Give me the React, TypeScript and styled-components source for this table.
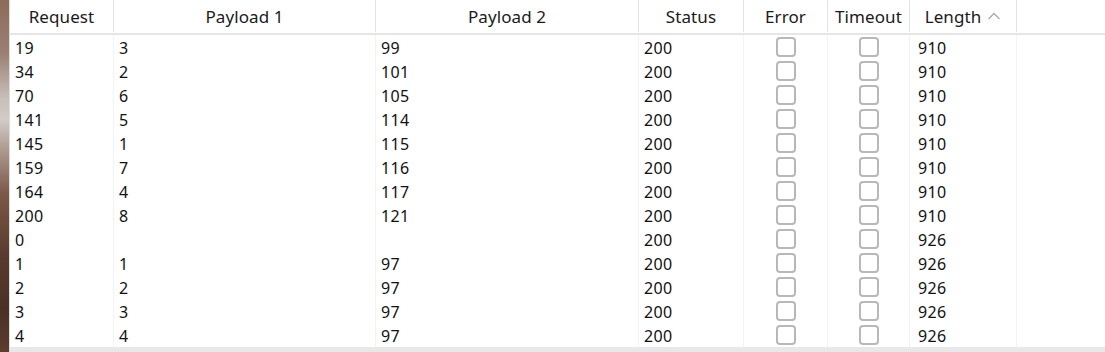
import styled, { createGlobalStyle } from 'styled-components';

type Row = {
  request: string;
  payload1: string;
  payload2: string;
  status: string;
  length: string;
};

const rows: Row[] = [
  { request: '19', payload1: '3', payload2: '99', status: '200', length: '910' },
  { request: '34', payload1: '2', payload2: '101', status: '200', length: '910' },
  { request: '70', payload1: '6', payload2: '105', status: '200', length: '910' },
  { request: '141', payload1: '5', payload2: '114', status: '200', length: '910' },
  { request: '145', payload1: '1', payload2: '115', status: '200', length: '910' },
  { request: '159', payload1: '7', payload2: '116', status: '200', length: '910' },
  { request: '164', payload1: '4', payload2: '117', status: '200', length: '910' },
  { request: '200', payload1: '8', payload2: '121', status: '200', length: '910' },
  { request: '0', payload1: '', payload2: '', status: '200', length: '926' },
  { request: '1', payload1: '1', payload2: '97', status: '200', length: '926' },
  { request: '2', payload1: '2', payload2: '97', status: '200', length: '926' },
  { request: '3', payload1: '3', payload2: '97', status: '200', length: '926' },
  { request: '4', payload1: '4', payload2: '97', status: '200', length: '926' },
];

const columns = '104px 262px 263px 105px 84px 82px 107px 1fr';

export default function App(): JSX.Element {
  return (
    <>
      <GlobalStyle />
      <Screen>
        <Wallpaper />
        <ResultsPane>
          <HeaderRow>
            <HeaderCell>Request</HeaderCell>
            <HeaderCell>Payload 1</HeaderCell>
            <HeaderCell>Payload 2</HeaderCell>
            <HeaderCell>Status</HeaderCell>
            <HeaderCell>Error</HeaderCell>
            <HeaderCell>Timeout</HeaderCell>
            <HeaderCell>
              Length
              <SortArrow width="14" height="10" viewBox="0 0 14 10">
                <polyline points="1.5,8 7,2.5 12.5,8" />
              </SortArrow>
            </HeaderCell>
            <HeaderCell $last />
          </HeaderRow>
          <Body>
            {rows.map((row, i) => (
              <DataRow key={i}>
                <Cell>{row.request}</Cell>
                <Cell>{row.payload1}</Cell>
                <Cell>{row.payload2}</Cell>
                <Cell>{row.status}</Cell>
                <CheckCell>
                  <CheckBox />
                </CheckCell>
                <CheckCell>
                  <CheckBox />
                </CheckCell>
                <Cell $padLeft={8}>{row.length}</Cell>
                <Cell $last />
              </DataRow>
            ))}
          </Body>
          <ScrollTrack />
        </ResultsPane>
      </Screen>
    </>
  );
}

const GlobalStyle = createGlobalStyle`
  html, body {
    margin: 0;
    padding: 0;
    background: #ffffff;
  }
  body {
    font-family: "Noto Sans", "Open Sans", "Liberation Sans", sans-serif;
    color: #111111;
  }
`;

const Screen = styled.div`
  display: flex;
  width: 1105px;
  height: 352px;
  overflow: hidden;
`;

const Wallpaper = styled.div`
  flex: 0 0 9px;
  border-right: 1px solid #dcdcdc;
  background: linear-gradient(
    180deg,
    #8e6b5a 0%,
    #9a7f72 15%,
    #c9bfba 28%,
    #d2cbc7 34%,
    #b09c92 42%,
    #7c5848 55%,
    #5a3b2d 72%,
    #4b3025 88%,
    #5c3d2f 100%
  );
`;

const ResultsPane = styled.div`
  flex: 1;
  display: flex;
  flex-direction: column;
  background: #ffffff;
`;

const HeaderRow = styled.div`
  display: grid;
  grid-template-columns: ${columns};
  height: 33px;
  border-bottom: 2px solid #e6e6e6;
`;

const HeaderCell = styled.div<{ $last?: boolean }>`
  display: flex;
  align-items: center;
  justify-content: center;
  gap: 4px;
  height: 32px;
  font-size: 17px;
  letter-spacing: 0.1px;
  color: #1a1a1a;
  border-right: ${({ $last }) => ($last ? 'none' : '1px solid #e3e3e3')};
  white-space: nowrap;
`;

const SortArrow = styled.svg`
  margin-left: 2px;
  fill: none;
  stroke: #a9a9a9;
  stroke-width: 1.3;
`;

const Body = styled.div`
  display: flex;
  flex-direction: column;
`;

const DataRow = styled.div`
  display: grid;
  grid-template-columns: ${columns};
  height: 24px;
`;

const Cell = styled.div<{ $padLeft?: number; $last?: boolean }>`
  display: flex;
  align-items: center;
  padding-left: ${({ $padLeft }) => $padLeft ?? 5}px;
  padding-top: 1px;
  font-size: 16px;
  letter-spacing: 0.4px;
  color: #111111;
  border-right: ${({ $last }) => ($last ? 'none' : '1px solid #f3f3f3')};
  white-space: nowrap;
`;

const CheckCell = styled.div`
  display: flex;
  align-items: center;
  justify-content: center;
  border-right: 1px solid #f3f3f3;
`;

const CheckBox = styled.span`
  box-sizing: border-box;
  width: 20px;
  height: 20px;
  border: 2px solid #b8b8b8;
  border-radius: 4px;
  background: #ffffff;
`;

const ScrollTrack = styled.div`
  flex: 1;
  background: #e8e8e8;
`;
